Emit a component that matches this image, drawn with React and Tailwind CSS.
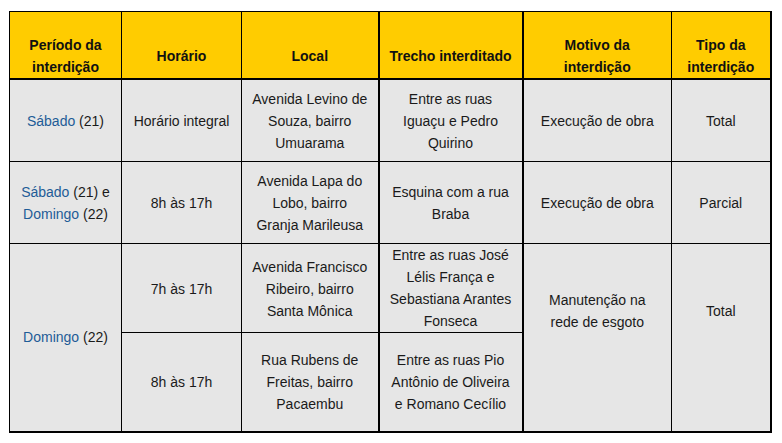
const head = "border border-black bg-[#ffcc00] px-2 pt-[22px] pb-0 align-middle text-center font-bold text-[#111] whitespace-nowrap";
const cell = "border border-black bg-[#e6e6e6] px-2 pt-[2px] align-middle text-center";

function Day({ children }) {
  return <span className="text-[#1e5c97]">{children}</span>;
}

export default function App() {
  return (
    <div className="min-h-screen bg-white pl-[9px] pt-[11px] font-[family-name:'Liberation_Sans',Arial,sans-serif] text-[14px] leading-[22px] text-[#1a1a1a]">
      <table className="table-fixed border-collapse border-r-2 border-b-2 border-black">
        <colgroup>
          <col className="w-[112px]" />
          <col className="w-[120px]" />
          <col className="w-[137px]" />
          <col className="w-[144px]" />
          <col className="w-[149px]" />
          <col className="w-[99px]" />
        </colgroup>
        <thead>
          <tr className="h-[66px] border-b-2 border-black">
            <th className={head}>Período da<br />interdição</th>
            <th className={head}>Horário</th>
            <th className={`${head} border-r-2`}>Local</th>
            <th className={`${head} border-r-2`}>Trecho interditado</th>
            <th className={head}>Motivo da<br />interdição</th>
            <th className={head}>Tipo da<br />interdição</th>
          </tr>
        </thead>
        <tbody>
          <tr className="h-[82px]">
            <td className={cell}><Day>Sábado</Day> (21)</td>
            <td className={cell}>Horário integral</td>
            <td className={`${cell} border-r-2`}>Avenida Levino de<br />Souza, bairro<br />Umuarama</td>
            <td className={`${cell} border-r-2`}>Entre as ruas<br />Iguaçu e Pedro<br />Quirino</td>
            <td className={cell}>Execução de obra</td>
            <td className={cell}>Total</td>
          </tr>
          <tr className="h-[82px]">
            <td className={cell}><Day>Sábado</Day> (21) e<br /><Day>Domingo</Day> (22)</td>
            <td className={cell}>8h às 17h</td>
            <td className={`${cell} border-r-2`}>Avenida Lapa do<br />Lobo, bairro<br />Granja Marileusa</td>
            <td className={`${cell} border-r-2`}>Esquina com a rua<br />Braba</td>
            <td className={cell}>Execução de obra</td>
            <td className={cell}>Parcial</td>
          </tr>
          <tr className="h-[89px]">
            <td rowSpan={2} className={`${cell} !pt-0`}><Day>Domingo</Day> (22)</td>
            <td className={cell}>7h às 17h</td>
            <td className={`${cell} border-r-2`}>Avenida Francisco<br />Ribeiro, bairro<br />Santa Mônica</td>
            <td className={`${cell} border-r-2 !pt-0`}>Entre as ruas José<br />Lélis França e<br />Sebastiana Arantes<br />Fonseca</td>
            <td rowSpan={2} className={`${cell} !pt-0 pb-[52px]`}>Manutenção na<br />rede de esgoto</td>
            <td rowSpan={2} className={`${cell} !pt-0 pb-[52px]`}>Total</td>
          </tr>
          <tr className="h-[100px]">
            <td className={`${cell} !pt-0`}>8h às 17h</td>
            <td className={`${cell} border-r-2 !pt-0`}>Rua Rubens de<br />Freitas, bairro<br />Pacaembu</td>
            <td className={`${cell} border-r-2 !pt-0`}>Entre as ruas Pio<br />Antônio de Oliveira<br />e Romano Cecílio</td>
          </tr>
        </tbody>
      </table>
    </div>
  );
}
